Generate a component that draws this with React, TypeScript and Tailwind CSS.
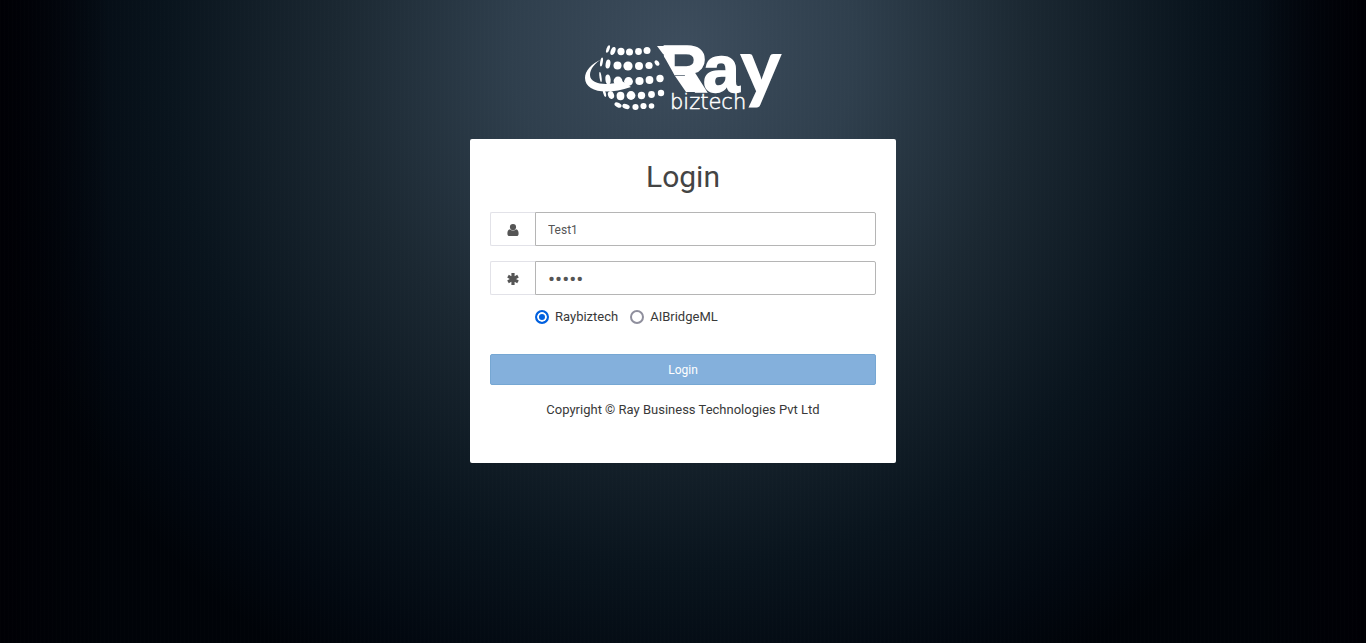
import { useState } from "react";
import type { ReactNode } from "react";

const dots: [number, number, number, number, number][] = [
  [23, 5, 1.5, 4, 20], [28, 7, 2.3, 4.2, 20], [36, 7.5, 3.6, 3.7, 0], [44.5, 8, 3.5, 3.5, 0], [53.5, 7.5, 3.4, 3.4, 0], [62, 6.5, 3.5, 3.5, 0],
  [16.5, 18, 1.3, 4.6, 10], [23, 20, 2.4, 4.6, 8], [32.5, 21.5, 4, 4, 0], [43, 22, 4.6, 4.6, 0], [54, 22, 4, 4, 0], [64, 21.5, 3.6, 3.6, 0], [72, 19, 2, 3, -35],
  [15.5, 33, 1, 5, -8], [23, 35.5, 2.6, 5, -6], [33, 37, 4.4, 4.4, 0], [43.5, 37.5, 4.4, 4.4, 0], [54.5, 37, 4.1, 4.1, 0], [64.5, 36, 3.9, 3.9, 0], [75, 34.5, 3.7, 3.7, 0],
  [19.5, 49, 1.3, 4, -15], [26, 51, 3, 4, -20], [35.5, 52, 3.9, 4.2, 0], [46, 51.5, 4.4, 4.4, 0], [56.5, 51.5, 3.7, 3.7, 0], [66.5, 50.5, 3.4, 3.4, 0], [76, 49, 3.2, 3.2, 0],
  [33, 61, 3.8, 2.2, 28], [41, 62.5, 3.8, 2.4, 20], [50.5, 63, 3.1, 2.9, 0], [58.5, 62, 3.1, 3.1, 0], [66.5, 62, 2.8, 2.8, 0],
];

function Logo() {
  return (
    <svg viewBox="0 0 200 70" className="h-[70px] w-[200px] overflow-visible" fill="#fff" role="img" aria-label="Ray biztech">
      <defs>
        <clipPath id="stemCut">
          <path d="M70 -20H230V90H103V50L94 34H92L78 9Z" />
        </clipPath>
      </defs>
      <g transform="translate(2 2)">
        {dots.map(([cx, cy, rx, ry, angle]) => (
          <ellipse key={`${cx}-${cy}`} cx={cx} cy={cy} rx={rx} ry={ry} transform={`rotate(${angle} ${cx} ${cy})`} />
        ))}
        <path d="M17 15C6 20 0 27 0 34C0 47 20 52 46 43L37 37C24 42 5 41 5 31C5 25 10 19 17 15Z" />
      </g>
      <path d="M74 4H100V12H80Z" />
      <path d="M92 34H106L114 50H103Z" />
      <text y="50" fontFamily="'Liberation Sans', Arial, sans-serif" fontWeight="700" fontSize="66" stroke="#fff" strokeWidth="1.5" clipPath="url(#stemCut)">
        <tspan x="77">R</tspan><tspan x="120">a</tspan><tspan x="157" y="52" fontFamily="Lato, sans-serif" fontWeight="900" fontSize="78" strokeWidth="0">y</tspan>
      </text>
      <text x="87" y="67" fontFamily="'DejaVu Sans', sans-serif" fontWeight="200" fontSize="21" stroke="#fff" strokeWidth="0.5">biztech</text>
    </svg>
  );
}

function UserIcon() {
  return (
    <svg viewBox="0 0 12 12" className="size-3" fill="currentColor" aria-hidden="true">
      <circle cx="6" cy="3.1" r="3.1" />
      <path d="M3 5.2C1 5.5.4 7.3.4 9.7.4 11.2 1.2 12 2.5 12H9.5C10.8 12 11.6 11.2 11.6 9.7 11.6 7.3 11 5.5 9 5.2 8.2 6.1 7.2 6.6 6 6.6S3.8 6.1 3 5.2Z" />
    </svg>
  );
}

function AsteriskIcon() {
  return (
    <svg viewBox="0 0 12 12" className="size-3" stroke="currentColor" strokeWidth="3.2" aria-hidden="true">
      <path d="M6 0V12M1 3.2L11 8.8M11 3.2L1 8.8" />
    </svg>
  );
}

function Field({ id, label, type, icon, initial }: { id: string; label: string; type: string; icon: ReactNode; initial: string }) {
  const [value, setValue] = useState(initial);
  return (
    <div className="flex h-[34px]">
      <label htmlFor={id} aria-label={label} className="flex w-[45px] items-center justify-center rounded-l-xs border border-r-0 border-[#e2e2e8] pt-0.5 text-[#555]">
        {icon}
      </label>
      <input
        id={id}
        type={type}
        value={value}
        onChange={(e) => setValue(e.target.value)}
        className={`${type === "password" ? "text-[21px]" : "text-xs"} min-w-0 flex-1 rounded-r-xs border border-[#b5b5b5] bg-white px-3 pt-0.5 text-[#555] outline-none`}
      />
    </div>
  );
}

function Company({ name, checked, onSelect }: { name: string; checked: boolean; onSelect: () => void }) {
  return (
    <label className="flex items-center gap-1.5">
      <input
        type="radio"
        name="company"
        checked={checked}
        onChange={onSelect}
        className="size-3.5 appearance-none rounded-full border-2 border-[#8f8f9d] bg-white checked:border-[#0060df] checked:bg-[#0060df] checked:shadow-[inset_0_0_0_2px_#fff]"
      />
      {name}
    </label>
  );
}

export default function App() {
  const [company, setCompany] = useState("Raybiztech");
  return (
    <main className="flex min-h-screen flex-col items-center bg-[#00040a] bg-[repeating-linear-gradient(90deg,rgba(255,255,255,0.008)_0px_1px,transparent_1px_4px),linear-gradient(90deg,#000005_0%,transparent_8%,transparent_92%,#000005_100%),radial-gradient(ellipse_720px_720px_at_50%_50px,#3d4d5d_0%,#2f3f4d_24%,#1b2832_48%,#09141d_72%,#020810_90%,#000308_100%)] px-4 pt-[42px] pb-8 font-['Roboto','Noto_Sans',sans-serif] text-[13px] leading-5 text-[#393939]">
      <Logo />
      <section className="mt-[27px] w-full max-w-[426px] rounded-xs bg-white px-5 pt-[18px] pb-[43px]">
        <h1 className="text-center text-3xl leading-10 text-[#444]">Login</h1>
        <form className="mt-[15px]" onSubmit={(e) => e.preventDefault()}>
          <div className="flex flex-col gap-[15px]">
            <Field id="username" label="User name" type="text" initial="Test1" icon={<UserIcon />} />
            <Field id="password" label="Password" type="password" initial="Test1" icon={<AsteriskIcon />} />
          </div>
          <div className="mt-3 ml-[45px] flex gap-3">
            <Company name="Raybiztech" checked={company === "Raybiztech"} onSelect={() => setCompany("Raybiztech")} />
            <Company name="AIBridgeML" checked={company === "AIBridgeML"} onSelect={() => setCompany("AIBridgeML")} />
          </div>
          <button type="submit" className="mt-[27px] h-[31px] w-full rounded-xs border border-[#76a7d3] bg-[#84b0dc] text-xs text-white">
            Login
          </button>
        </form>
        <p className="mt-[15px] text-center">Copyright © Ray Business Technologies Pvt Ltd</p>
      </section>
    </main>
  );
}
